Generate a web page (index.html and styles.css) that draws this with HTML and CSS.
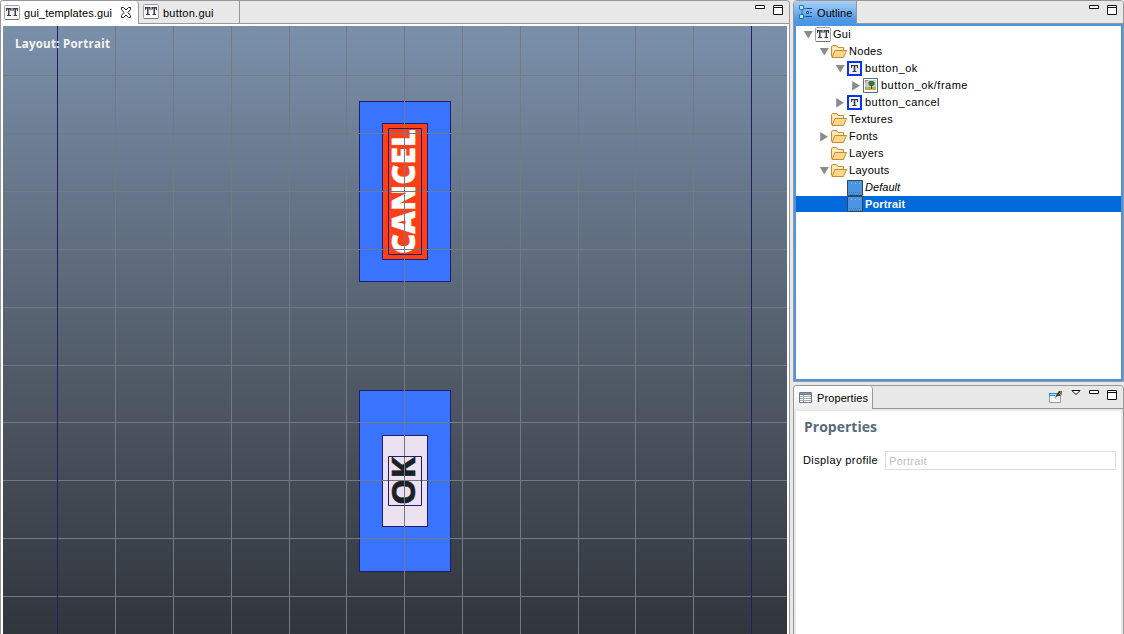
FILE: index.html
```html
<!DOCTYPE html>
<html lang="en">
<head>
<meta charset="utf-8">
<title>gui_templates.gui</title>
<link rel="stylesheet" href="styles.css">
</head>
<body>
<svg class="defs" aria-hidden="true">
  <symbol id="gui" viewBox="0 0 16 16"><rect x=".5" y=".5" width="15" height="14" rx="1" fill="#f7f7f7" stroke="#a0a0a0"/><path d="M1 14.500h14" stroke="#777"/><path d="M2 3h5.500v3h-.8L6 4.200h-.5V10H7v1H3v-1h1V4.200h-.5L2.800 6H2zM8.500 3H14v3h-.8l-.7-1.800H12V10h1v1H9.500v-1h1V4.200H10L9.300 6h-.8z" fill="#3c4049"/></symbol>
  <symbol id="folder" viewBox="0 0 16 16"><path d="M.5 12.500V2.500l1-1h4l1.500 2h5.500v3" fill="#fbe3ab" stroke="#c98a35"/><path d="M1 13.500L4 6.500h11.500l-3 7z" fill="#fbd888" stroke="#c98a35"/><path d="M2 4.500h9" stroke="#fff3cf"/></symbol>
  <symbol id="template" viewBox="0 0 16 16"><rect x="1" y="1" width="13" height="13" fill="#f4f4f6" stroke="#0634f4" stroke-width="2"/><path d="M4 4h7v3h-.8l-.7-2H8.300v5h1.200v1h-4v-1h1.200V5H5.500l-.7 2H4z" fill="#333945"/></symbol>
  <symbol id="image" viewBox="0 0 16 16"><path d="M.5.5h14v14H.5z" fill="#fff" stroke="#527082"/><path d="M2 2h11v7H2z" fill="#a8d5f2"/><path d="M2 9h11v3H2z" fill="#b0b148"/><path d="M2 2h3L2 5z" fill="#f36d31"/><path d="M6.500 3H10l1.500 1.500v2L10 8H7L5.500 6.500v-2z" fill="#596d20"/><path d="M8.500 7v4" stroke="#5d4424"/></symbol>
  <symbol id="layout" viewBox="0 0 16 16"><path d="M.5.5h15v15H.5z" fill="#4b96e2" stroke="#32465d"/><path d="M2 12.500h12M3 14.500h11" stroke="#3278bd" stroke-dasharray="1 1"/><path d="M4 3.500h9" stroke="#89bced" stroke-dasharray="1 3"/></symbol>
  <symbol id="down" viewBox="0 0 10 10"><path d="M.8 1h9L5.300 8.500z" fill="#8b8b8b"/></symbol>
  <symbol id="right" viewBox="0 0 10 10"><path d="M1.200 0v9.500L9 4.700z" fill="#8b8b8b"/></symbol>
  <symbol id="minimize" viewBox="0 0 10 4"><path d="M.5.5h9v3h-9z" fill="#fff" stroke="#111"/></symbol>
  <symbol id="maximize" viewBox="0 0 10 10"><path d="M.5.5h9v9h-9zM1 2.500h8" fill="#fff" stroke="#111"/></symbol>
</svg>

<main class="workbench">
  <section class="pane editor">
    <header class="tabbar">
      <div class="tab active tab-templates"><svg class="icon"><use href="#gui"/></svg><span class="t-templates">gui_templates.gui</span>
        <svg class="close" viewBox="0 0 12 11"><path d="M1.500.5h2L6 3 8.500.5h2v2L8 5.500l2.500 3v2h-2L6 8l-2.500 2.500h-2v-2l2.500-3-2.500-3z" fill="#fff" stroke="#222"/></svg>
      </div>
      <div class="tab tab-button"><svg class="icon"><use href="#gui"/></svg><span class="t-button">button.gui</span></div>
      <div class="tools"><svg class="min"><use href="#minimize"/></svg><svg class="max"><use href="#maximize"/></svg></div>
    </header>
    <svg class="canvas" viewBox="3 26 784 608">
      <defs><linearGradient id="sky" x1="0" y1="0" x2="0" y2="1"><stop offset="0" stop-color="#7a90aa"/><stop offset=".5" stop-color="#56616f"/><stop offset="1" stop-color="#31353c"/></linearGradient></defs>
      <rect x="3" y="26" width="784" height="608" fill="url(#sky)"/>
      <g class="node">
        <rect class="button" x="359.500" y="101.500" width="91" height="180"/>
        <rect class="cancel" x="382.500" y="123.500" width="45" height="136"/>
        <rect class="button" x="359.500" y="390.500" width="91" height="181"/>
        <rect class="ok" x="382.500" y="435.500" width="45" height="91"/>
      </g>
      <text class="label cancel-label" transform="translate(415 254) rotate(-90)" textLength="125" lengthAdjust="spacingAndGlyphs">CANCEL</text>
      <text class="label ok-label" transform="translate(415 505) rotate(-90)" textLength="48" lengthAdjust="spacingAndGlyphs">OK</text>
      <path class="grid" d="M115.500 26v608M173.500 26v608M231.500 26v608M289.500 26v608M346.500 26v608M404.500 26v608M462.500 26v608M520.500 26v608M578.500 26v608M635.500 26v608M693.500 26v608M3 75.500h784M3 133.500h784M3 191.500h784M3 249.500h784M3 307.500h784M3 365.500h784M3 422.500h784M3 480.500h784M3 538.500h784M3 596.500h784"/>
      <path class="bounds" d="M57.500 26v608M751.500 26v608"/>
      <path class="bounds" d="M388.500 128.500h33v126h-33zM388.500 456.500h33v49h-33z"/>
      <text class="layout-name" x="15" y="48" textLength="95">Layout: Portrait</text>
    </svg>
  </section>

  <aside class="side">
    <section class="pane outline">
      <header class="tabbar">
        <div class="tab tab-outline">
          <svg class="icon" viewBox="0 0 16 16"><path d="M3 5v5M5 3.500h3M5 11.500h3" stroke="#247fb6" fill="none"/><path d="M.5.500h4v4h-4zM.5 9.500h4v4h-4z" fill="#bce7ff" stroke="#167ab4"/><path d="M8 3.500h5M7 7.500h2M11 7.500h2M7 11.500h6" stroke="#174e9b"/><path d="M7.500 6.500h2v2h-2z" fill="#fff" stroke="#174e9b"/></svg>
          <span class="t-outline">Outline</span>
        </div>
        <div class="tools"><svg class="min"><use href="#minimize"/></svg><svg class="max"><use href="#maximize"/></svg></div>
      </header>
      <div class="tree">
        <div class="row l0"><svg class="arrow"><use href="#down"/></svg><svg class="icon"><use href="#gui"/></svg><span>Gui</span></div>
        <div class="row l1"><svg class="arrow"><use href="#down"/></svg><svg class="icon"><use href="#folder"/></svg><span>Nodes</span></div>
        <div class="row l2"><svg class="arrow"><use href="#down"/></svg><svg class="icon"><use href="#template"/></svg><span class="wide">button_ok</span></div>
        <div class="row l3"><svg class="arrow"><use href="#right"/></svg><svg class="icon"><use href="#image"/></svg><span class="wide">button_ok/frame</span></div>
        <div class="row l2"><svg class="arrow"><use href="#right"/></svg><svg class="icon"><use href="#template"/></svg><span class="wide">button_cancel</span></div>
        <div class="row l1"><i class="arrow"></i><svg class="icon"><use href="#folder"/></svg><span>Textures</span></div>
        <div class="row l1"><svg class="arrow"><use href="#right"/></svg><svg class="icon"><use href="#folder"/></svg><span>Fonts</span></div>
        <div class="row l1"><i class="arrow"></i><svg class="icon"><use href="#folder"/></svg><span>Layers</span></div>
        <div class="row l1"><svg class="arrow"><use href="#down"/></svg><svg class="icon"><use href="#folder"/></svg><span>Layouts</span></div>
        <div class="row l2 inherited"><i class="arrow"></i><svg class="icon"><use href="#layout"/></svg><span>Default</span></div>
        <div class="row l2 selected"><i class="arrow"></i><svg class="icon"><use href="#layout"/></svg><span>Portrait</span></div>
      </div>
    </section>

    <section class="pane properties">
      <header class="tabbar">
        <div class="tab active tab-properties">
          <svg class="table-icon" viewBox="0 0 13 11"><path d="M.5.5h12v10H.5z" fill="#fff" stroke="#6d7687"/><path d="M1 1.500h11" stroke="#8d9bb6"/><path d="M1 4.500h11M1 6.500h11M1 8.500h11M4.500 3v7" stroke="#a5adb9"/><path d="M1 2.500h11" stroke="#687386"/></svg>
          <span class="t-properties">Properties</span>
        </div>
        <div class="tools">
          <svg class="pin" viewBox="0 0 15 14"><path d="M.5 4.500h11v8H.5z" fill="#effaff" stroke="#9a9a9a"/><path d="M0 3h8v3H0z" fill="#318dce"/><path d="M1 4.500h6" stroke="#9fdcff"/><path d="M5 7l3 3M6 6l3-2" stroke="#b9d3e4"/><path d="M6 8l2-4 1-2 1-1h3v3l-2 2H9z" fill="#403f36"/><path d="M10 3l2 2M12 1v3" stroke="#baa12f"/></svg>
          <svg class="menu" viewBox="0 0 10 5"><path d="M.8.5h8.400L5 4.500z" fill="#fff" stroke="#111"/></svg>
          <svg class="min"><use href="#minimize"/></svg><svg class="max"><use href="#maximize"/></svg>
        </div>
      </header>
      <div class="form">
        <h1>Properties</h1>
        <div class="field"><label for="profile">Display profile</label><div class="input" id="profile">Portrait</div></div>
      </div>
    </section>
  </aside>
</main>
</body>
</html>
```
FILE: styles.css
```css
* { box-sizing: border-box; }
body { margin: 0; background: #e8e8e8; font: 11px/17px "Liberation Sans", Arial, sans-serif; color: #000; overflow: hidden; }
svg { display: block; flex: none; }
.defs { position: absolute; width: 0; height: 0; }
.workbench { display: flex; gap: 3px; width: 1124px; height: 634px; }
.pane { display: flex; flex-direction: column; border: 1px solid #979797; border-radius: 4px 4px 0 0; overflow: hidden; }
.editor { width: 790px; border-bottom: 0; background: #fff; }
.tabbar { display: flex; height: 23px; flex: none; background: #e8e8e8; border-bottom: 1px solid #979797; }
.tab { display: flex; align-items: center; height: 22px; border-right: 1px solid #979797; white-space: nowrap; }
.tab.active { height: 23px; background: #fff; border-top-right-radius: 4px; }
.tab span { line-height: 16px; padding-top: 1px; }
.icon { width: 16px; height: 16px; }
.tab-templates { width: 138px; padding-left: 3px; }
.tab-templates .close { width: 12px; height: 11px; margin-left: 8px; }
.tab-templates .icon, .tab-button .icon { margin-right: 4px; }
.t-templates { width: 88px; letter-spacing: .1px; }
.t-button { letter-spacing: .25px; }
.tab-button { width: 101px; padding-left: 4px; }
.tools { display: flex; align-items: flex-start; margin-left: auto; padding: 4px 6px 0 0; }
.min { width: 10px; height: 4px; margin-right: 8px; }
.max { width: 10px; height: 10px; }
.canvas { width: 784px; height: 608px; margin: 2px 0 0 2px; }
.node rect { stroke: #241a70; }
.button { fill: #3874ff; }
.cancel { fill: #ff4016; }
.ok { fill: #ece2ef; }
.grid { fill: none; stroke: #707b83; }
.bounds { fill: none; stroke: #241a70; }
.label { font: 800 32.5px "Open Sans", "Noto Sans", sans-serif; }
.cancel-label { fill: #fff; stroke: #fff; stroke-width: .4; }
.ok-label { font-weight: 700; fill: #1b2026; stroke: #1b2026; stroke-width: .5; }
.layout-name { font: 700 11.5px "Open Sans", "Noto Sans", sans-serif; fill: #f5f5f5; }

.side { display: flex; flex-direction: column; gap: 3px; width: 331px; }
.outline { height: 382px; }
.tab-outline { width: 63px; padding-left: 5px; background: linear-gradient(#a9d0f7, #4d96e2 85%); height: 23px; }
.t-outline { margin-left: 2px; letter-spacing: .1px; }
.tree { flex: 1; background: #fff; border: 2px solid #4b94e1; }
.row { display: flex; align-items: center; height: 17px; white-space: nowrap; }
.row span { margin-left: 2px; letter-spacing: .3px; }
.row span.wide { letter-spacing: .5px; }
.row .icon { margin-left: 2px; }
.arrow { width: 10px; height: 10px; flex: none; }
.l0 { padding-left: 7px; }
.l1 { padding-left: 23px; }
.l2 { padding-left: 39px; }
.l3 { padding-left: 55px; }
.row.inherited span { font-style: italic; letter-spacing: .05px; }
.selected { height: 16px; color: #fff; background: #0069dc; font-weight: 700; }
.row.selected span { letter-spacing: .15px; }

.properties { flex: 1; border-bottom: 0; }
.tab-properties { width: 79px; padding-left: 5px; }
.tab.tab-properties { background: linear-gradient(#fff, #eee); }
.table-icon { width: 13px; height: 11px; margin-bottom: 1px; }
.t-properties { margin-left: 5px; letter-spacing: .1px; }
.pin { width: 15px; height: 14px; margin-right: 7px; }
.menu { width: 10px; height: 5px; margin-right: 8px; }
.form { flex: 1; margin: 2px 2px 0; padding: 6px 5px 0 7px; background: #fff; }
.form h1 { margin: 0 0 15px 1px; font: 700 14px/19px "Open Sans", "Noto Sans", sans-serif; color: #566a7c; }
.field { display: flex; align-items: center; }
.field label { width: 82px; letter-spacing: .4px; }
.input { flex: 1; height: 19px; padding: 1px 3px 0; border: 1px solid #dedede; color: #bcc0c6; line-height: 16px; letter-spacing: .3px; }
```
